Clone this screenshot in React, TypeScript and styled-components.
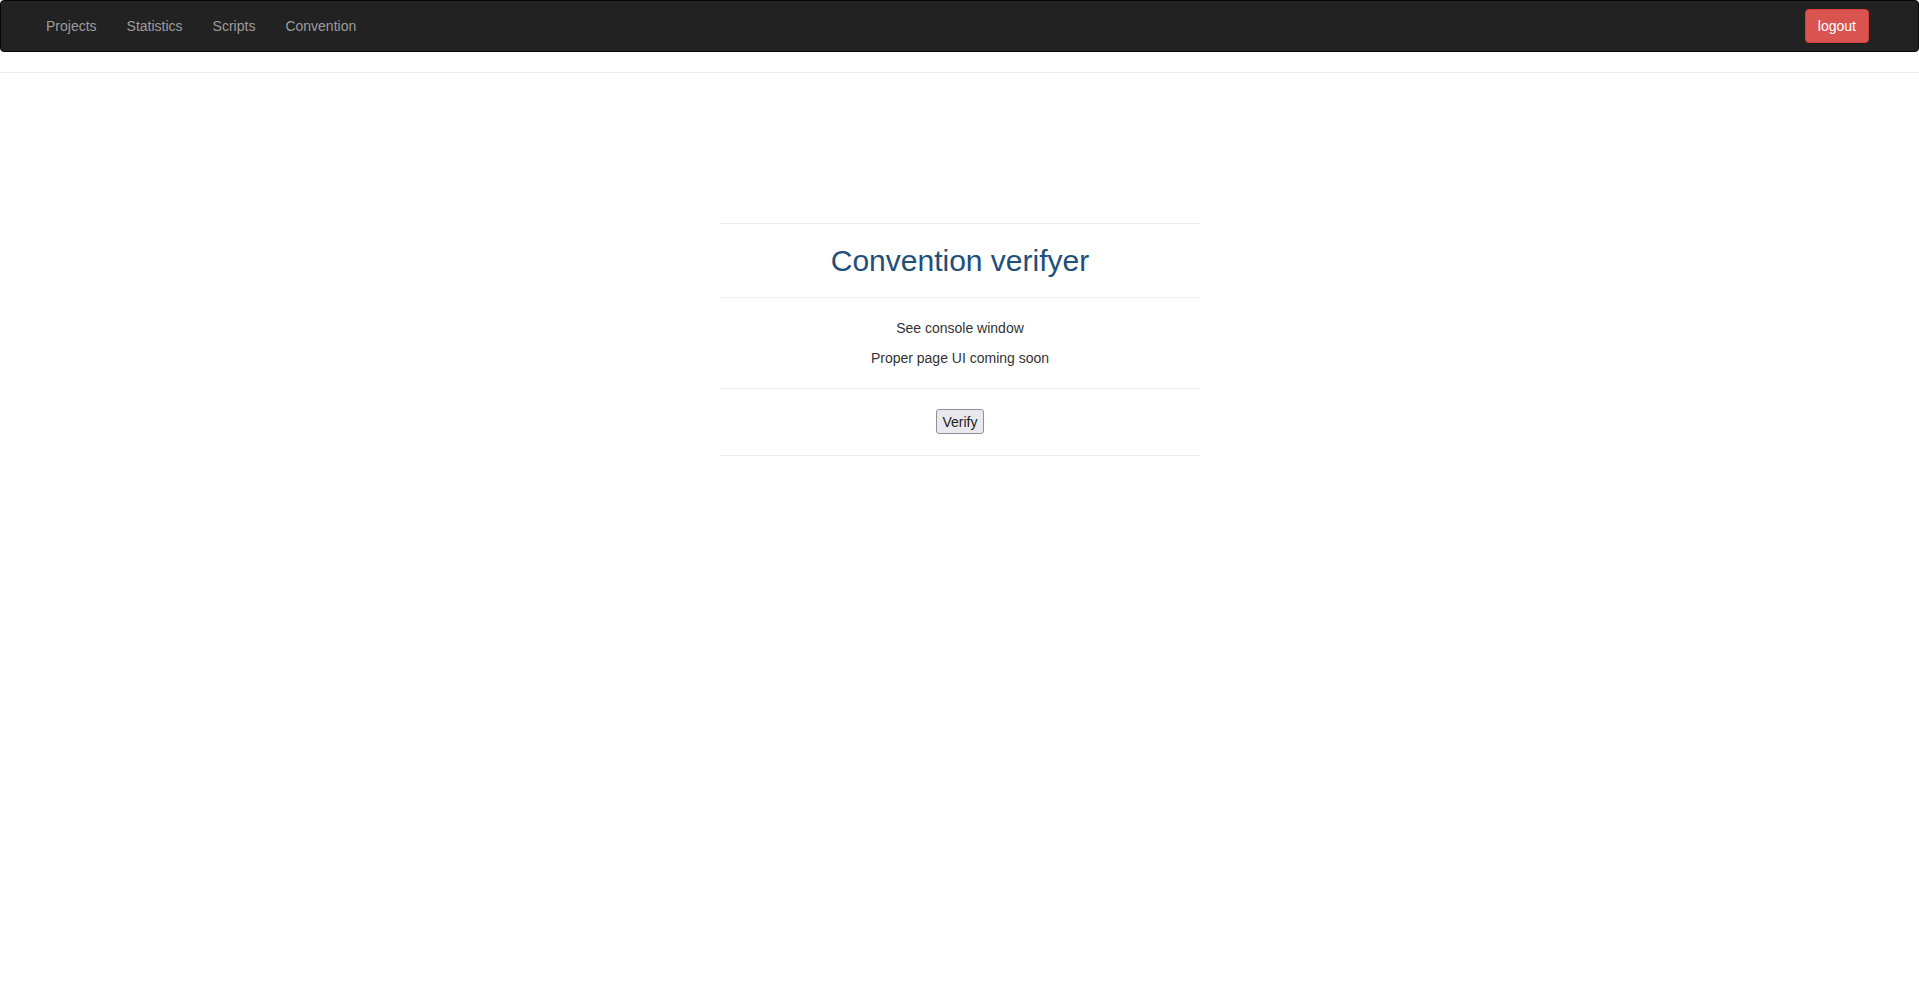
import { createGlobalStyle } from "styled-components";
import styled from "styled-components";

const GlobalStyle = createGlobalStyle`
  html, body {
    margin: 0;
    padding: 0;
    background: #fff;
  }
  body {
    font-family: "Liberation Sans", Arial, Helvetica, sans-serif;
    font-size: 14px;
    line-height: 20px;
    color: #333;
  }
  * {
    box-sizing: border-box;
  }
`;

const Navbar = styled.nav`
  display: flex;
  justify-content: space-between;
  align-items: flex-start;
  height: 52px;
  background-color: #222;
  border: 1px solid #080808;
  border-radius: 4px;
  padding: 0 15px 0 30px;
  margin-bottom: 20px;
`;

const NavList = styled.ul`
  display: flex;
  list-style: none;
  margin: 0;
  padding: 0;
`;

const NavLink = styled.a`
  display: block;
  padding: 15px;
  line-height: 20px;
  color: #9d9d9d;
  text-decoration: none;
  cursor: pointer;

  &:hover {
    color: #fff;
  }
`;

const LogoutButton = styled.button`
  margin: 8px 34px 0 0;
  padding: 6px 12px;
  height: 34px;
  font-family: inherit;
  font-size: 14px;
  line-height: 20px;
  color: #fff;
  background-color: #d9534f;
  border: 1px solid #d43f3a;
  border-radius: 4px;
  cursor: pointer;
`;

const Rule = styled.hr`
  margin: 0;
  border: 0;
  border-top: 1px solid #eee;
`;

const Main = styled.main`
  display: flex;
  justify-content: center;
  padding: 150px 0 0 1px;
`;

const Panel = styled.div`
  width: 480px;
  border-bottom: 1px solid #eee;
`;

const Section = styled.section<{ $pad?: string }>`
  display: flex;
  flex-direction: column;
  align-items: center;
  gap: 10px;
  border-top: 1px solid #eee;
  padding: ${(p) => p.$pad ?? "20px 0"};
  text-align: center;
`;

const Title = styled.h2`
  margin: 0;
  font-size: 30px;
  font-weight: 500;
  line-height: 33px;
  color: #204f7a;
`;

const Text = styled.p`
  margin: 0;
`;

const VerifyButton = styled.button`
  height: 25px;
  padding: 1px 5px;
  font-family: inherit;
  font-size: 14px;
  line-height: 20px;
  color: #222;
  background-color: #e9e9ed;
  border: 1px solid #8f8f9d;
  border-radius: 3px;
  cursor: pointer;
`;

const links = ["Projects", "Statistics", "Scripts", "Convention"];

export default function App() {
  return (
    <>
      <GlobalStyle />
      <Navbar>
        <NavList>
          {links.map((l) => (
            <li key={l}>
              <NavLink>{l}</NavLink>
            </li>
          ))}
        </NavList>
        <LogoutButton>logout</LogoutButton>
      </Navbar>
      <Rule />
      <Main>
        <Panel>
          <Section $pad="20px 0 20px">
            <Title>Convention verifyer</Title>
          </Section>
          <Section $pad="20px 0 20px">
            <Text>See console window</Text>
            <Text>Proper page UI coming soon</Text>
          </Section>
          <Section $pad="20px 0 21px">
            <VerifyButton>Verify</VerifyButton>
          </Section>
        </Panel>
      </Main>
    </>
  );
}
